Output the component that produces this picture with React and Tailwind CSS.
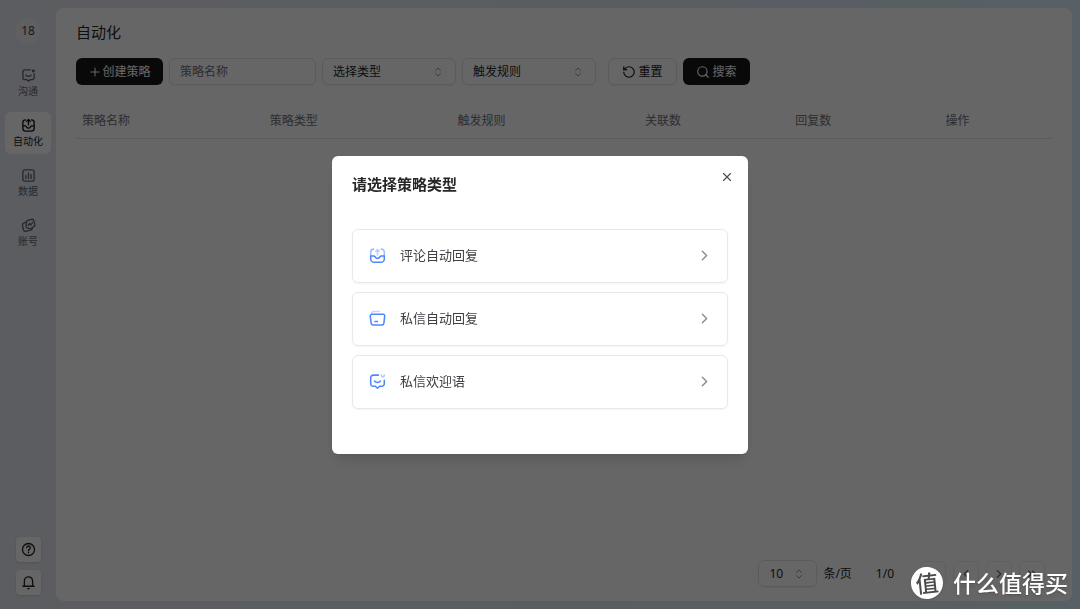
import { useState } from "react";
import { ChevronRight, ChevronLeft, ChevronsLeft, ChevronsRight, ChevronsUpDown, Plus, RotateCcw, Search, X } from "lucide-react";

function _renderIcon(name) {
    const icons = {
        chat: (
            <>
                <path d="M12.500 2.500H5A2.500 2.500 0 0 0 2.500 5v8A2.500 2.500 0 0 0 5 15.500h2.500L10 17.500l2.500-2H15a2.500 2.500 0 0 0 2.500-2.500V8" />
                <path d="M6.500 9.500c2 2.300 5 2.300 7 0" />
                <circle cx="16.500" cy="3.800" r="1.300" />
            </>
        ),
        inbox: (
            <>
                <path d="M6 2.500A3.500 3.500 0 0 0 2.500 6v8A3.500 3.500 0 0 0 6 17.500h8a3.500 3.500 0 0 0 3.500-3.500V6A3.500 3.500 0 0 0 14 2.500" />
                <path d="M2.500 10.500h3.500c1 0 1.300 3 4 3s3-3 4-3h3.500" />
                <path d="M10 9V2.500M7.500 4.500 10 2l2.500 2.500" />
            </>
        ),
        chart: (
            <>
                <rect x="2.500" y="2.500" width="15" height="15" rx="2.500" />
                <path d="M6.500 10v4M10 6.500V14M13.500 9v5" />
            </>
        ),
        account: (
            <>
                <path d="M6 5.500 3.500 7A2.500 2.500 0 0 0 2 10l1.500 6a2.500 2.500 0 0 0 3 1.800l6.500-1.600a3 3 0 0 0 2-1.600" />
                <path d="M9.500 3 14 1.800a2.500 2.500 0 0 1 3 1.700l1.400 5a2.500 2.500 0 0 1-.9 2.700l-3.500 2.600a2.500 2.500 0 0 1-2 .4l-3.500-.8a2.500 2.500 0 0 1-1.900-2.700l.6-5.500A2.700 2.700 0 0 1 9.500 3Z" />
                <path d="m9.500 9.800 1.800-2.600 1.700 2.300 2.300-3.500" />
            </>
        ),
        help: (
            <>
                <circle cx="10" cy="10" r="8" />
                <path d="M7.600 7.700a2.400 2.400 0 1 1 3.400 2.200c-.7.300-1 .7-1 1.400v.4M10 14v.4" />
            </>
        ),
        bell: (
            <>
                <path d="M2.500 15h15M4.500 15V8a5.500 5.500 0 0 1 11 0v7" />
                <path d="M9 18.200h2" />
            </>
        ),
    };

    return (
        <svg
            className="size-[15px]"
            viewBox="0 0 20 20"
            fill="none"
            stroke="currentColor"
            strokeWidth="1.8"
            strokeLinecap="round"
            strokeLinejoin="round"
        >
            {icons[name]}
        </svg>
    );
}

// Two tone icons of the strategy cards
function _renderStrategyIcon(name) {
    const icons = {
        comment: (
            <>
                <path d="M5.500 2.500A3.500 3.500 0 0 0 2 6v4M14.500 2.500A3.500 3.500 0 0 1 18 6v4" opacity="0.55" />
                <path d="M10 9.500V4M8 5l2-2 2 2" opacity="0.4" />
                <path d="M2 10.500h4c1 0 1.300 3 4 3s3-3 4-3h4V14a4 4 0 0 1-4 4H6a4 4 0 0 1-4-4Z" />
            </>
        ),
        folder: (
            <>
                <path d="M3 3.500C3.500 2 4.500 1.800 6 1.800h6" opacity="0.35" />
                <path d="M3.500 5h13a2 2 0 0 1 2 2.200l-1 8.300a2.500 2.500 0 0 1-2.500 2.200H5a2.500 2.500 0 0 1-2.500-2.200l-1-8.300A2 2 0 0 1 3.500 5Z" />
                <path d="M7 13.500h3" />
            </>
        ),
        welcome: (
            <>
                <path d="M11 2.500H5A3 3 0 0 0 2 5.500v7a3 3 0 0 0 3 3h2.500l2.500 2.500 2.500-2.500H15a3 3 0 0 0 3-3V8.500" />
                <path d="M6.500 9.500c2 2.300 5 2.300 7 0" />
                <path d="M14.500 2.500c0 2.500 3.500 2.500 3.500 0" opacity="0.45" />
            </>
        ),
    };

    return (
        <svg
            className="size-[17px] text-[#4d86ff]"
            viewBox="0 0 20 20"
            fill="none"
            stroke="currentColor"
            strokeWidth="1.8"
            strokeLinecap="round"
            strokeLinejoin="round"
        >
            {icons[name]}
        </svg>
    );
}

const menus = [
    { icon: "chat", label: "沟通" },
    { icon: "inbox", label: "自动化" },
    { icon: "chart", label: "数据" },
    { icon: "account", label: "账号" },
];

const columns = [
    { label: "策略名称", width: "w-5/26" },
    { label: "策略类型", width: "w-5/26" },
    { label: "触发规则", width: "w-5/26" },
    { label: "关联数", width: "w-2/13" },
    { label: "回复数", width: "w-2/13" },
    { label: "操作", width: "w-auto" },
];

const strategies = [
    { icon: "comment", label: "评论自动回复" },
    { icon: "folder", label: "私信自动回复" },
    { icon: "welcome", label: "私信欢迎语" },
];

function SelectBox({ label, options, className }) {
    return (
        <div className={`grid items-center ${className}`}>
            <select
                aria-label={label}
                className="col-start-1 row-start-1 h-[27px] w-full appearance-none rounded-md border border-[#e4e4e7] bg-transparent px-2.5 text-xs text-[#27272a] shadow-xs"
            >
                {options.map((option) => (
                    <option key={option}>{option}</option>
                ))}
            </select>
            <ChevronsUpDown className="pointer-events-none col-start-1 row-start-1 mr-3 size-3 justify-self-end text-[#8b8b93]" strokeWidth={1.8} />
        </div>
    );
}

function Sidebar() {
    return (
        <aside className="flex w-14 shrink-0 flex-col items-center pt-2.5 pb-1.5">
            <div className="flex size-[26px] items-center justify-center rounded-full bg-[#eeeff2] text-xs text-[#3f3f46]">
                18
            </div>

            <nav className="mt-[18px] flex w-full flex-col gap-2 px-[5px]">
                {menus.map((menu) => (
                    <a
                        key={menu.label}
                        href="#"
                        className={`flex h-[42px] flex-col items-center justify-center rounded-md text-[10px] leading-4 ${
                            menu.label === "自动化" ? "bg-white text-[#18181b]" : "text-[#62666f]"
                        }`}
                    >
                        {_renderIcon(menu.icon)}
                        {menu.label}
                    </a>
                ))}
            </nav>

            <div className="mt-auto flex flex-col gap-2">
                <button aria-label="帮助" className="flex size-[25px] items-center justify-center rounded bg-white text-[#27272a] shadow-sm">
                    {_renderIcon("help")}
                </button>
                <button aria-label="通知" className="flex size-[25px] items-center justify-center rounded bg-white text-[#27272a] shadow-sm">
                    {_renderIcon("bell")}
                </button>
            </div>
        </aside>
    );
}

function Toolbar({ onCreate }) {
    return (
        <div className="mt-3.5 flex items-center text-xs">
            <button
                onClick={onCreate}
                className="flex h-[27px] w-[87px] items-center justify-center rounded-md bg-[#18181b] text-white"
            >
                <Plus className="size-3.5" strokeWidth={1.8} />
                创建策略
            </button>
            <input
                aria-label="策略名称"
                placeholder="策略名称"
                className="ml-1.5 h-[27px] w-[147px] rounded-md border border-[#e4e4e7] px-2.5 shadow-xs placeholder:text-[#71717a]"
            />
            <SelectBox label="选择类型" options={["选择类型"]} className="ml-1.5 w-[134px]" />
            <SelectBox label="触发规则" options={["触发规则"]} className="ml-1.5 w-[134px]" />
            <button className="ml-3 flex h-[27px] w-[69px] items-center justify-center gap-0.5 rounded-md border border-[#e4e4e7] text-[#18181b] shadow-xs">
                <RotateCcw className="size-3.5" />
                重置
            </button>
            <button className="ml-1.5 flex h-[27px] w-[67px] items-center justify-center gap-0.5 rounded-md bg-[#18181b] text-white">
                <Search className="size-3.5" />
                搜索
            </button>
        </div>
    );
}

function Pagination() {
    const pages = [
        { label: "第一页", Icon: ChevronsLeft },
        { label: "上一页", Icon: ChevronLeft },
        { label: "下一页", Icon: ChevronRight },
        { label: "最后一页", Icon: ChevronsRight },
    ];

    return (
        <div className="mt-auto flex items-center justify-end pr-[7px] text-xs text-[#27272a]">
            <SelectBox label="每页条数" options={["10", "20", "50"]} className="w-[59px]" />
            <span className="ml-1.5">条/页</span>
            <span className="ml-6">1/0</span>
            <div className="ml-[26px] flex gap-[7px]">
                {pages.map(({ label, Icon }) => (
                    <button
                        key={label}
                        aria-label={label}
                        className="flex size-[26px] items-center justify-center rounded-md border border-[#e4e4e7] text-[#18181b] opacity-60"
                    >
                        <Icon className="size-3.5" />
                    </button>
                ))}
            </div>
        </div>
    );
}

function StrategyDialog({ onClose }) {
    return (
        <div className="fixed inset-0 flex items-center justify-center bg-black/60">
            <div
                role="dialog"
                aria-modal="true"
                aria-labelledby="strategy-title"
                className="w-[416px] rounded-md bg-white px-5 pt-4 pb-[45px] shadow-lg"
            >
                <div className="flex items-start justify-between">
                    <h2 id="strategy-title" className="text-[15px] leading-6 font-semibold text-[#27272a]">
                        请选择策略类型
                    </h2>
                    <button aria-label="关闭" onClick={onClose} className="-mt-0.5 -mr-1.5 text-[#52525b]">
                        <X className="size-3.5" />
                    </button>
                </div>

                <div className="mt-[33px] flex flex-col gap-[9px]">
                    {strategies.map((strategy) => (
                        <button
                            key={strategy.label}
                            className="flex h-[54px] items-center rounded-md border border-[#e8e8ea] pr-3.5 pl-4 text-[13px] text-[#3f3f46] shadow-xs"
                        >
                            {_renderStrategyIcon(strategy.icon)}
                            <span className="ml-3.5">{strategy.label}</span>
                            <ChevronRight className="ml-auto size-[17px] text-[#8b8b93]" />
                        </button>
                    ))}
                </div>
            </div>
        </div>
    );
}

function Watermark() {
    return (
        <div className="pointer-events-none fixed right-3 bottom-2.5 flex items-center gap-2.5 text-white">
            <span className="flex size-8 -rotate-6 items-center justify-center rounded-full bg-white text-[23px] font-medium text-[#4b4b4b] shadow">
                值
            </span>
            <span className="text-[23px] leading-8 font-medium text-shadow-md">什么值得买</span>
        </div>
    );
}

export default function App() {
    const [showStrategyDialog, setShowStrategyDialog] = useState(true);

    return (
        <div className="flex min-h-screen bg-linear-to-r from-[#e6e9f2] via-[#dfe8f5] to-[#d9f0fa] py-2 pr-2 font-['Noto_Sans','Noto_Sans_CJK_SC',sans-serif]">
            <Sidebar />

            <main className="flex grow flex-col rounded-lg bg-white px-5 pt-3 pb-3.5">
                <h1 className="text-[15px] leading-6 text-[#27272a]">自动化</h1>
                <Toolbar onCreate={() => setShowStrategyDialog(true)} />

                <table className="mt-[17px] w-full table-fixed text-left text-xs text-[#71717a]">
                    <thead>
                        <tr className="h-9 border-b border-[#e4e4e7]">
                            {columns.map((column) => (
                                <th key={column.label} className={`px-1.5 pt-0.5 font-normal ${column.width}`}>
                                    {column.label}
                                </th>
                            ))}
                        </tr>
                    </thead>
                </table>

                <Pagination />
            </main>

            {showStrategyDialog && <StrategyDialog onClose={() => setShowStrategyDialog(false)} />}
            <Watermark />
        </div>
    );
}
